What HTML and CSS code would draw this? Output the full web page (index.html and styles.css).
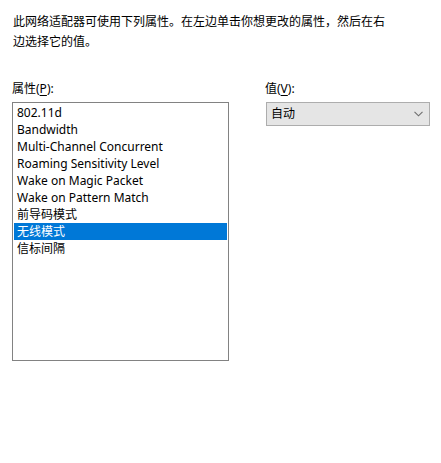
FILE: index.html
```html
<!DOCTYPE html>
<html lang="zh-CN">
<head>
<meta charset="utf-8">
<link rel="stylesheet" href="styles.css">
</head>
<body>
<div class="page">
  <p class="intro">此网络适配器可使用下列属性。在左边单击你想更改的属性，然后在右边选择它的值。</p>
  <div class="form">
    <div class="col-left">
      <div class="label">属性(<u>P</u>):</div>
      <ul class="listbox">
        <li>802.11d</li>
        <li>Bandwidth</li>
        <li>Multi-Channel Concurrent</li>
        <li>Roaming Sensitivity Level</li>
        <li>Wake on Magic Packet</li>
        <li>Wake on Pattern Match</li>
        <li>前导码模式</li>
        <li class="selected">无线模式</li>
        <li>信标间隔</li>
      </ul>
    </div>
    <div class="col-right">
      <div class="label">值(<u>V</u>):</div>
      <div class="combo">
        <span class="combo-text">自动</span>
        <svg class="chev" width="9" height="6" viewBox="0 0 9 6"><path d="M0.5 0.8 L4.5 4.8 L8.5 0.8" fill="none" stroke="#6d6d6d" stroke-width="1.1"/></svg>
      </div>
    </div>
  </div>
</div>
</body>
</html>
```

FILE: styles.css
```css
html, body {
  margin: 0;
  padding: 0;
  background: #ffffff;
}
body {
  font-family: "Noto Sans", "Noto Sans CJK SC", sans-serif;
  font-size: 12px;
  color: #000000;
  width: 441px;
  height: 463px;
  overflow: hidden;
}
.page {
  padding: 12px 0 0 13px;
}
.intro {
  margin: 0;
  width: 380px;
  line-height: 20px;
}
.form {
  display: flex;
  gap: 36px;
  margin-top: 27px;
}
.label {
  line-height: 20px;
  height: 20px;
}
.label u {
  text-decoration-thickness: 1px;
  text-underline-offset: 2px;
}
.col-left {
  margin-left: -1px;
}
.listbox {
  list-style: none;
  margin: 3px 0 0 0;
  padding: 1px 1px 0 1px;
  width: 213px;
  height: 256px;
  border: 1px solid #828282;
  box-sizing: content-box;
}
.listbox li {
  height: 17px;
  line-height: 17px;
  padding-left: 3px;
  white-space: nowrap;
}
.listbox li.selected {
  background: #0078d7;
  color: #ffffff;
}
.col-right {
  display: flex;
  flex-direction: column;
}
.combo {
  margin: 3px 0 0 1px;
  width: 152px;
  height: 22px;
  border: 1px solid #adadad;
  background: #e5e5e5;
  display: flex;
  align-items: center;
  justify-content: space-between;
  padding: 0 6px 0 4px;
  box-sizing: content-box;
}
.combo-text {
  line-height: 22px;
}
.chev {
  display: block;
}
```
